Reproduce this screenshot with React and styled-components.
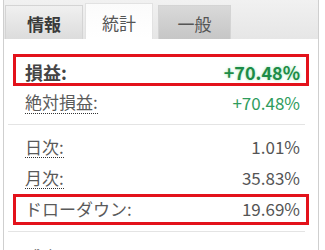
import React from "react";
import styled, { createGlobalStyle } from "styled-components";

const GlobalStyle = createGlobalStyle`
  html, body {
    margin: 0;
    padding: 0;
    background: #ffffff;
    font-family: "Noto Sans CJK JP", "Noto Sans", sans-serif;
  }
`;

const Page = styled.div`
  width: 325px;
  height: 250px;
  overflow: hidden;
  background: #ffffff;
`;

const Panel = styled.div`
  margin-left: 3px;
  width: 314px;
  border-left: 1px solid #cfcfcf;
  border-right: 1px solid #cfcfcf;
  background: #ffffff;
`;

const TabBar = styled.div`
  display: flex;
  align-items: flex-end;
  gap: 2px;
  height: 39px;
  padding-left: 1px;
  box-sizing: border-box;
  background: linear-gradient(#f1f1f1, #e6e6e6);
`;

const tabBackgrounds = {
  idle: "linear-gradient(#f0f0f0, #dcdcdc)",
  active: "linear-gradient(#fbfbfb, #ffffff)",
  dark: "linear-gradient(#d9d9d9, #c6c6c6)",
};

const Tab = styled.div`
  display: flex;
  align-items: center;
  justify-content: center;
  width: ${(p) => p.$width}px;
  height: ${(p) => (p.$variant === "active" ? 36 : 34)}px;
  box-sizing: border-box;
  padding-top: 2px;
  background: ${(p) => tabBackgrounds[p.$variant]};
  border: 1px solid ${(p) => (p.$variant === "active" ? "#e2e2e2" : "#d4d4d4")};
  border-bottom: none;
  font-size: 17px;
  font-weight: ${(p) => (p.$variant === "idle" ? 700 : 400)};
  color: ${(p) => (p.$variant === "idle" ? "#3a3a3a" : "#555555")};
  margin-right: ${(p) => (p.$variant === "active" ? 3 : 0)}px;
`;

const Group = styled.div`
  padding: ${(p) => p.$top}px 0 ${(p) => p.$bottom}px;
`;

const Separator = styled.div`
  height: 1px;
  margin: 0 13px 0 4px;
  background: #e4e4e4;
`;

const Row = styled.div`
  position: relative;
  display: flex;
  align-items: center;
  justify-content: space-between;
  height: ${(p) => p.$height}px;
  padding: 0 18px 0 21px;
`;

const Label = styled.span`
  font-size: ${(p) => (p.$strong ? 18 : 17)}px;
  font-weight: ${(p) => (p.$strong ? 700 : 400)};
  color: ${(p) => (p.$strong ? "#444444" : "#5a5a5a")};
  line-height: 1.2;
  border-bottom: ${(p) => (p.$dotted ? "1px dotted #333333" : "1px solid transparent")};
`;

const Value = styled.span`
  font-size: ${(p) => (p.$strong ? 18 : 17)}px;
  font-weight: ${(p) => (p.$strong ? 700 : 400)};
  color: ${(p) =>
    p.$tone === "gain" ? (p.$strong ? "#1d8c47" : "#2f9c5c") : "#555555"};
  text-shadow: ${(p) =>
    p.$strong ? "0 0 3px rgba(60, 200, 110, 0.45)" : "none"};
  line-height: 1.2;
`;

const Highlight = styled.span`
  position: absolute;
  left: 9px;
  right: 9px;
  top: ${(p) => p.$top}px;
  bottom: ${(p) => p.$bottom}px;
  border: 3px solid #e3121b;
  pointer-events: none;
`;

const groups = [
  {
    top: 19,
    bottom: 6,
    rows: [
      { label: "損益:", value: "+70.48%", tone: "gain", strong: true, dotted: true, box: [-4, 2] },
      { label: "絶対損益:", value: "+70.48%", tone: "gain", dotted: true },
    ],
  },
  {
    top: 7,
    bottom: 6,
    height: 31,
    rows: [
      { label: "日次:", value: "1.01%", dotted: true },
      { label: "月次:", value: "35.83%", dotted: true },
      { label: "ドローダウン:", value: "19.69%", box: [0, 0] },
    ],
  },
  {
    top: 11,
    bottom: 0,
    rows: [{ label: "残高:", value: "$15,843.59", dotted: true }],
  },
];

export default function App() {
  return (
    <Page>
      <GlobalStyle />
      <Panel>
        <TabBar>
          <Tab $variant="idle" $width={78}>情報</Tab>
          <Tab $variant="active" $width={68}>統計</Tab>
          <Tab $variant="dark" $width={73}>一般</Tab>
        </TabBar>
        {groups.map((g, gi) => (
          <React.Fragment key={gi}>
            {gi > 0 && <Separator />}
            <Group $top={g.top} $bottom={g.bottom}>
              {g.rows.map((r) => (
                <Row key={r.label} $height={g.height || 30}>
                  <Label $strong={r.strong} $dotted={r.dotted}>{r.label}</Label>
                  <Value $strong={r.strong} $tone={r.tone}>{r.value}</Value>
                  {r.box && <Highlight $top={r.box[0]} $bottom={r.box[1]} />}
                </Row>
              ))}
            </Group>
          </React.Fragment>
        ))}
      </Panel>
    </Page>
  );
}
